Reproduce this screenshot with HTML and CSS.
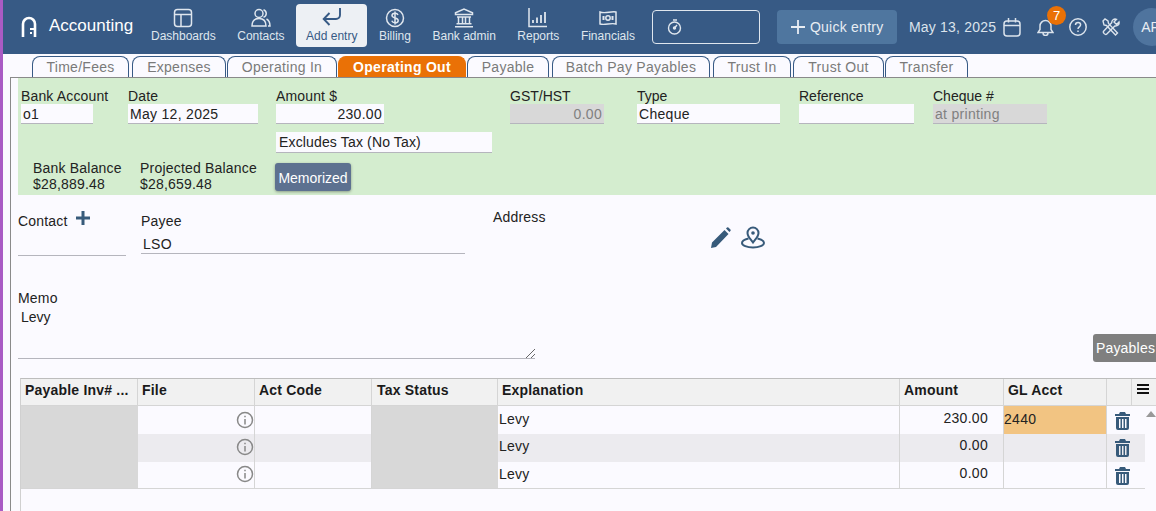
FILE: index.html
```html
<!DOCTYPE html>
<html lang="en">
<head>
<meta charset="utf-8">
<title>Accounting</title>
<link rel="stylesheet" href="styles.css">
</head>
<body>
<div class="app">
  <header class="topbar">
    <div class="brand">
      <svg class="logo" width="16" height="21" viewBox="0 0 16 21" fill="none" stroke="#fff" stroke-width="2.6"><path d="M2 21V8a6 6 0 0 1 12 0v13"/><path d="M9 13h5" stroke-width="2"/><path d="M9 17h2" stroke-width="2"/></svg>
      <span class="brand-name">Accounting</span>
    </div>
    <nav class="nav">
      <a class="nav-item"><svg width="20" height="20" viewBox="0 0 20 20" fill="none" stroke="currentColor" stroke-width="1.5"><rect x="1.5" y="1.5" width="17" height="17" rx="3"/><path d="M1.5 6.5h17M8 6.5v12"/></svg><span>Dashboards</span></a>
      <a class="nav-item"><svg width="20" height="20" viewBox="0 0 20 20" fill="none" stroke="currentColor" stroke-width="1.5"><circle cx="8" cy="5.5" r="4"/><path d="M1 18c0-6 3-7.5 7-7.5s7 1.500 7 7.500z"/><path d="M12.500 1.700a4 4 0 0 1 0 7.600M15.500 11c2 1 3.500 3 3.500 7h-2"/></svg><span>Contacts</span></a>
      <a class="nav-item active"><svg width="20" height="20" viewBox="0 0 20 20" fill="none" stroke="currentColor" stroke-width="1.900"><path d="M18 0v7a4 4 0 0 1-4 4H2"/><path d="M7.500 5L1.700 11l5.800 6"/></svg><span>Add entry</span></a>
      <a class="nav-item"><svg width="20" height="20" viewBox="0 0 20 20" fill="none" stroke="currentColor" stroke-width="1.500"><circle cx="10" cy="10" r="8.500"/><path d="M13 7c-.5-1.300-1.600-1.800-3-1.800-1.700 0-3 .8-3 2.300 0 3.200 6.200 1.600 6.200 4.900 0 1.500-1.400 2.400-3.200 2.400-1.500 0-2.700-.7-3.200-2M10 3.500v13"/></svg><span>Billing</span></a>
      <a class="nav-item"><svg width="20" height="20" viewBox="0 0 20 20" fill="none" stroke="currentColor" stroke-width="1.500"><path d="M1.500 6.500V4.800L10 1l8.500 3.800v1.700zM3 9h14M4.500 9v6.500M8.500 9v6.500M11.500 9v6.500M15.500 9v6.500M2.500 15.800h15M1 18.700h18"/></svg><span>Bank admin</span></a>
      <a class="nav-item"><svg width="20" height="20" viewBox="0 0 20 20" fill="none" stroke="currentColor" stroke-width="1.500"><path d="M1 0v18.500h18"/><path d="M5 15v-3M9 15V9.500M13 15V7M17 15V4" stroke-width="1.800"/></svg><span>Reports</span></a>
      <a class="nav-item"><svg width="20" height="20" viewBox="0 0 20 20" fill="none" stroke="currentColor" stroke-width="1.500"><path d="M2 4c5 2 11-1 16 0v12c-5-1.500-11 1.500-16 0z"/><circle cx="10" cy="10" r="2.200"/><path d="M5.500 8v4M14.500 8v4" stroke-width="2"/></svg><span>Financials</span></a>
    </nav>
    <button class="timer" type="button"><svg width="15" height="16" viewBox="0 0 15 16" fill="none" stroke="#dfe6ee" stroke-width="1.400"><circle cx="7.500" cy="9" r="6"/><path d="M6 1h4M7.500 9l2.500-3" /><circle cx="7.500" cy="9" r="1" fill="#dfe6ee"/></svg></button>
    <button class="quick" type="button"><svg width="16" height="16" viewBox="0 0 16 16" stroke="#e8edf3" stroke-width="1.800"><path d="M8 1v14M1 8h14"/></svg><span>Quick entry</span></button>
    <span class="today">May 13, 2025</span>
    <svg class="tool cal" width="18" height="19" viewBox="0 0 18 19" fill="none" stroke="#dbe3ec" stroke-width="1.500"><rect x="1" y="3" width="16" height="15" rx="3"/><path d="M1 7.500h16M5.500 0v4.500M12.500 0v4.500"/></svg>
    <span class="bell"><svg width="17" height="18" viewBox="0 0 17 18" fill="none" stroke="#dbe3ec" stroke-width="1.500"><path d="M1 14.500h15l-2-3V8a5.500 5.500 0 0 0-11 0v3.500zM6 15a2.500 2.500 0 0 0 5 0"/></svg><span class="badge">7</span></span>
    <svg class="tool help" width="18" height="18" viewBox="0 0 18 18" fill="none" stroke="#dbe3ec" stroke-width="1.500"><circle cx="9" cy="9" r="8.200"/><path d="M6.500 7c0-1.600 1.100-2.500 2.600-2.500S11.600 5.400 11.600 6.800c0 2-2.600 2.100-2.600 4.200"/><path d="M9 12.500v1.500"/></svg>
    <svg class="tool wrench" width="18" height="18" viewBox="0 0 18 18" fill="none" stroke="#dbe3ec" stroke-width="1.400"><path d="M1 3l2-2 3 2 .5 2.500 9 9.500-2 2-9-9.500L2 7z"/><path d="M17 4l-2.500 2.500-2.500-2.500L14.500 1.300c-2.500-.8-5 .8-4.800 3.500L1.800 13c-1.500 1.500 1.500 4.500 3 3l8-8c2.700.4 4.800-1.500 4.200-4z"/></svg>
    <span class="avatar">AP</span>
  </header>

  <ul class="tabs">
    <li class="tab w1">Time/Fees</li>
    <li class="tab w2">Expenses</li>
    <li class="tab w3">Operating In</li>
    <li class="tab tab-on w4">Operating Out</li>
    <li class="tab w5">Payable</li>
    <li class="tab w6">Batch Pay Payables</li>
    <li class="tab w7">Trust In</li>
    <li class="tab w8">Trust Out</li>
    <li class="tab w9">Transfer</li>
  </ul>

  <main class="panel">
    <section class="green">
      <div class="field"><label>Bank Account</label><div class="input i-bank">o1</div></div>
      <div class="field"><label>Date</label><div class="input i-date">May 12, 2025</div></div>
      <div class="field"><label>Amount $</label><div class="input i-amt">230.00</div></div>
      <div class="field"><label class="narrow">GST/HST</label><div class="input i-gst off">0.00</div></div>
      <div class="field"><label class="narrow">Type</label><div class="input i-type">Cheque</div></div>
      <div class="field"><label class="narrow">Reference</label><div class="input i-ref"></div></div>
      <div class="field"><label class="narrow">Cheque #</label><div class="input i-chq off">at printing</div></div>
      <div class="input i-tax">Excludes Tax (No Tax)</div>
      <div class="bal b1">Bank Balance<br>$28,889.48</div>
      <div class="bal b2">Projected Balance<br>$28,659.48</div>
      <button class="memo-btn" type="button">Memorized</button>
    </section>

    <section class="contact">
      <div class="c-field c-contact">
        <div class="c-label">Contact <svg class="plus" width="14" height="14" viewBox="0 0 14 14" stroke="#375a7a" stroke-width="3"><path d="M7 0v14M0 7h14"/></svg></div>
        <div class="c-value"></div>
      </div>
      <div class="c-field c-payee">
        <div class="c-label">Payee</div>
        <div class="c-value">LSO</div>
      </div>
      <div class="c-address">Address</div>
      <svg class="pencil" width="20" height="21" viewBox="0 0 20 21" fill="#375a7a"><path d="M0 21l1-5.500L13.500 3l4 4L5 20zM15 1.500l1-1a1 1 0 0 1 1.400 0l2 2a1 1 0 0 1 0 1.400l-1 1z"/></svg>
      <svg class="pin" width="24" height="23" viewBox="0 0 24 23" fill="none" stroke="#375a7a" stroke-width="2"><path d="M12 16.500C9 12.500 6.500 10.500 6.500 7a5.500 5.500 0 0 1 11 0c0 3.500-2.500 5.500-5.500 9.500z"/><circle cx="12" cy="7" r="1.800" fill="#375a7a" stroke="none"/><path d="M7.500 12.500C3.500 13.500 1 15 1 17c0 2.500 5 4.500 11 4.500S23 19.500 23 17c0-2-2.500-3.500-6.500-4.500"/></svg>
    </section>

    <section class="memo">
      <div class="c-label">Memo</div>
      <div class="memo-box">Levy<svg class="grip" width="9" height="9" viewBox="0 0 9 9" stroke="#666" stroke-width="1"><path d="M0 9L9 0M5 9l4-4"/></svg></div>
    </section>

    <div class="pay-row"><button class="pay-btn" type="button">Payables</button></div>

    <section class="grid">
      <div class="g-row g-head">
        <div class="hc">Payable Inv# ...</div>
        <div class="hc">File</div>
        <div class="hc">Act Code</div>
        <div class="hc h-tax">Tax Status</div>
        <div class="hc">Explanation</div>
        <div class="hc">Amount</div>
        <div class="hc">GL Acct</div>
        <div class="hc"></div>
        <div class="hc menu"><svg width="12" height="10" viewBox="0 0 12 10" stroke="#111" stroke-width="2"><path d="M0 1h12M0 5h12M0 9h12"/></svg></div>
      </div>
      <div class="g-scroll"></div>
      <div class="g-row g-body">
        <div class="c grey"></div><div class="c file"><svg class="info" width="18" height="18" viewBox="0 0 18 18" fill="none" stroke="#888" stroke-width="1.500"><circle cx="9" cy="9" r="7.500"/><path d="M9 8v5.500M9 4.800v1.400"/></svg></div><div class="c"></div><div class="c grey"></div><div class="c txt">Levy</div><div class="c num">230.00</div><div class="c gl">2440</div><div class="c act"><svg class="trash" width="15" height="18" viewBox="0 0 15 18" fill="#375a7a"><path d="M5 0h5l1 2h4v2H0V2h4zM1 5h13v11a2 2 0 0 1-2 2H3a2 2 0 0 1-2-2zm3 2v9h1.500V7zm3 0v9h1.500V7zm3 0v9h1.500V7z" fill-rule="evenodd"/></svg></div>
      </div>
      <div class="g-row g-body alt">
        <div class="c grey"></div><div class="c file"><svg class="info" width="18" height="18" viewBox="0 0 18 18" fill="none" stroke="#888" stroke-width="1.500"><circle cx="9" cy="9" r="7.500"/><path d="M9 8v5.500M9 4.800v1.400"/></svg></div><div class="c"></div><div class="c grey"></div><div class="c txt">Levy</div><div class="c num">0.00</div><div class="c"></div><div class="c act"><svg class="trash" width="15" height="18" viewBox="0 0 15 18" fill="#375a7a"><path d="M5 0h5l1 2h4v2H0V2h4zM1 5h13v11a2 2 0 0 1-2 2H3a2 2 0 0 1-2-2zm3 2v9h1.500V7zm3 0v9h1.500V7zm3 0v9h1.500V7z" fill-rule="evenodd"/></svg></div>
      </div>
      <div class="g-row g-body last">
        <div class="c grey"></div><div class="c file"><svg class="info" width="18" height="18" viewBox="0 0 18 18" fill="none" stroke="#888" stroke-width="1.500"><circle cx="9" cy="9" r="7.500"/><path d="M9 8v5.500M9 4.800v1.400"/></svg></div><div class="c"></div><div class="c grey"></div><div class="c txt">Levy</div><div class="c num">0.00</div><div class="c"></div><div class="c act"><svg class="trash" width="15" height="18" viewBox="0 0 15 18" fill="#375a7a"><path d="M5 0h5l1 2h4v2H0V2h4zM1 5h13v11a2 2 0 0 1-2 2H3a2 2 0 0 1-2-2zm3 2v9h1.500V7zm3 0v9h1.500V7zm3 0v9h1.500V7z" fill-rule="evenodd"/></svg></div>
      </div>
    </section>
  </main>
</div>
</body>
</html>
```

FILE: styles.css
```css
* { box-sizing: border-box; }
html, body { margin: 0; height: 511px; overflow: hidden; }
body { background: #fbfaff; font-family: "Liberation Sans", Arial, sans-serif; font-size: 14px; color: #222; }
.app { height: 511px; width: 1156px; border-left: 3px solid #a95bc4; overflow: hidden; }

.topbar { height: 54px; background: #375a85; display: flex; align-items: center; color: #dfe6ee; white-space: nowrap; overflow: hidden; }
.brand { flex: none; display: flex; align-items: center; width: 138px; padding-left: 18px; margin-bottom: 2px; color: #fff; }
.logo { margin-top: 1px; }
.brand-name { font-size: 17px; margin-left: 12px; }
.nav { flex: none; display: flex; gap: 1.5px; margin-top: -3px; }
.nav-item { height: 43px; padding: 4px 10px 0; border-radius: 4px; font-size: 12px; display: flex; flex-direction: column; align-items: center; color: #dfe6ee; line-height: 14px; }
.nav-item svg { flex: none; margin-bottom: 1px; }
.nav-item.active { background: #edf0f4; color: #375a85; }
.timer { flex: none; width: 108px; height: 34px; margin: 0 0 1px 7px; background: transparent; border: 1px solid #dfe6ee; border-radius: 4px; display: flex; align-items: center; padding: 0 0 0 14px; }
.quick { flex: none; width: 120px; height: 34px; margin: 0 0 1px 17px; background: #4f769f; border: 0; border-radius: 4px; display: flex; align-items: center; gap: 4px; padding: 0 0 0 13px; color: #e8edf3; font: 14px "Liberation Sans", Arial, sans-serif; letter-spacing: .25px; }
.today { flex: none; font-size: 14px; margin-left: 12px; letter-spacing: .2px; color: #dbe3ec; }
.tool { flex: none; }
.cal { margin-left: 7px; }
.bell { flex: none; position: relative; display: flex; margin-left: 16px; }
.badge { position: absolute; left: 10px; top: -12px; width: 19px; height: 19px; border-radius: 50%; background: #ea7106; color: #fff; font-size: 13px; line-height: 19px; text-align: center; }
.help { margin-left: 15px; }
.wrench { margin-left: 15px; }
.avatar { flex: none; width: 38px; height: 38px; margin-left: 13px; border-radius: 50%; background: #4f749e; font-size: 14px; line-height: 38px; padding-left: 8px; color: #e8edf3; }

.tabs { list-style: none; display: flex; margin: 2px 0 0; padding: 0 0 0 29px; height: 21px; }
.tab { height: 21px; margin-right: 1px; border: 1px solid #375a85; border-bottom: 0; border-radius: 8px 8px 0 0; text-align: center; color: #7a7a7a; letter-spacing: .28px; line-height: 21px; white-space: nowrap; background: #fbfaff; }
.tab-on { background: #ea7106; border-color: #ea7106; color: #fff; font-weight: 700; }
.w1 { width: 97px; margin-right: 3px; }
.w2 { width: 94px; }
.w3 { width: 110px; }
.w4 { width: 128px; }
.w5 { width: 82px; margin-right: 3px; }
.w6 { width: 158px; margin-right: 3px; }
.w7 { width: 78px; margin-right: 2px; }
.w8 { width: 91px; }
.w9 { width: 83px; }

.panel { margin-left: 7px; border-left: 1px solid #8a8a8a; border-top: 1px solid #8a8a8a; height: 434px; }
.green { margin-left: 7px; height: 117px; background: #d4edcf; display: grid; padding: 10px 0 0 3px; grid-template-columns: 107px 148px 234px 127px 162px 134px 1fr; grid-template-rows: 36px 39px 32px; }
.field label { display: block; height: 16px; line-height: 16px; letter-spacing: .15px; }
.field label.narrow { letter-spacing: 0; }
.input { height: 20px; background: #fbfaff; border-bottom: 1px solid #b5b5bd; line-height: 20px; padding: 0 2px; white-space: nowrap; letter-spacing: .3px; }
.i-bank { width: 72px; }
.i-date { width: 130px; }
.i-amt { width: 108px; text-align: right; }
.i-gst { width: 94px; text-align: right; }
.i-type { width: 143px; }
.i-ref { width: 115px; }
.i-chq { width: 114px; }
.off { background: #d8d8d8; color: #808080; }
.i-tax { grid-column: 3 / span 2; grid-row: 2; width: 216px; height: 21px; margin-top: 8px; padding-left: 3px; letter-spacing: .15px; background: #fbfaff; }
.bal { line-height: 16px; grid-row: 3; margin-left: 12px; margin-top: -3px; white-space: nowrap; letter-spacing: .2px; }
.b1 { grid-column: 1; }
.b2 { grid-column: 2; }
.memo-btn { grid-column: 3; grid-row: 3; justify-self: start; width: 76px; height: 28px; margin: 0 0 0 -1px; padding: 2px 0 0; background: #5d7190; color: #fff; border: 0; border-radius: 3px; font: 14px "Liberation Sans", Arial, sans-serif; box-shadow: 0 1px 3px rgba(0,0,0,.35); }

.contact { display: flex; padding-left: 7px; height: 64px; }
.c-label { line-height: 16px; letter-spacing: .2px; }
.c-field { padding-top: 18px; }
.c-contact { width: 108px; padding-top: 16px; }
.c-contact .c-value { height: 27px; }
.c-payee { width: 324px; margin-left: 15px; }
.c-value { height: 25px; border-bottom: 1px solid #b5b5bd; line-height: 25px; padding: 3px 0 0 2px; margin-top: 0; letter-spacing: .3px; }
.plus { vertical-align: 1px; margin-left: 4px; }
.c-address { margin: 14px 0 0 28px; width: 218px; line-height: 16px; letter-spacing: .2px; }
.pencil { margin-top: 32px; }
.pin { margin: 31px 0 0 10px; }

.memo { padding: 31px 0 0 7px; }
.memo-box { position: relative; width: 517px; height: 53px; border-bottom: 1px solid #b5b5bd; padding: 3px 0 0 3px; line-height: 16px; }
.grip { position: absolute; right: 0; bottom: 0; }

.pay-row { display: flex; justify-content: flex-end; height: 28px; margin-top: -25px; }
.pay-btn { width: 63px; height: 28px; padding: 0 0 0 2px; background: #7f7f7f; color: #fff; border: 0; border-radius: 3px 0 0 3px; font: 14px "Liberation Sans", Arial, sans-serif; letter-spacing: .2px; white-space: nowrap; }

.grid { position: relative; margin: 16px 0 0 9px; height: 140px; border-left: 1px solid #d0d0d0; border-top: 1px solid #bdbdbd; }
.g-row { display: grid; grid-template-columns: 117px 117px 117px 126px 402px 104px 103px 25px 24px; }
.g-head { height: 27px; background: #f1f1f1; border-bottom: 1px solid #d5d5d5; }
.hc { font-weight: 700; letter-spacing: .2px; padding: 3px 0 0 4px; line-height: 16px; border-right: 1px solid #d5d5d5; white-space: nowrap; color: #1a1a1a; }
.hc.h-tax { padding-left: 5px; }
.hc.menu { border-right: 0; padding-left: 5px; padding-top: 2px; }
.g-scroll { position: absolute; right: 0; top: 32px; width: 0; height: 0; border: 5px solid transparent; border-top: 0; border-bottom: 6px solid #999; }
.g-body { height: 28px; width: 1124px; grid-template-columns: 117px 117px 117px 126px 402px 104px 103px 37px; }
.g-body.alt { background: #ecebef; }
.g-body.last { height: 27px; border-bottom: 1px solid #d5d5d5; }
.c { height: 100%; border-right: 1px solid #d5d5d5; line-height: 26px; white-space: nowrap; letter-spacing: .3px; }
.grey { background: #d8d8d8; border-right: 0; }
.file { display: flex; justify-content: flex-end; align-items: center; }
.txt { padding-left: 1px; border-right: 1px solid #d5d5d5; letter-spacing: .2px; }
.num { text-align: right; padding-right: 15px; line-height: 24px; }
.gl { background: #f2c482; margin-bottom: 1px; color: #222; }
.act { border-right: 0; padding: 6px 0 0 8px; }
.trash { display: block; }
.alt .txt, .last .txt { line-height: 24px; }
.alt .num, .last .num { line-height: 22px; }
.alt .file, .last .file { padding-bottom: 2px; }
.alt .act, .last .act { padding-top: 5px; }
```
